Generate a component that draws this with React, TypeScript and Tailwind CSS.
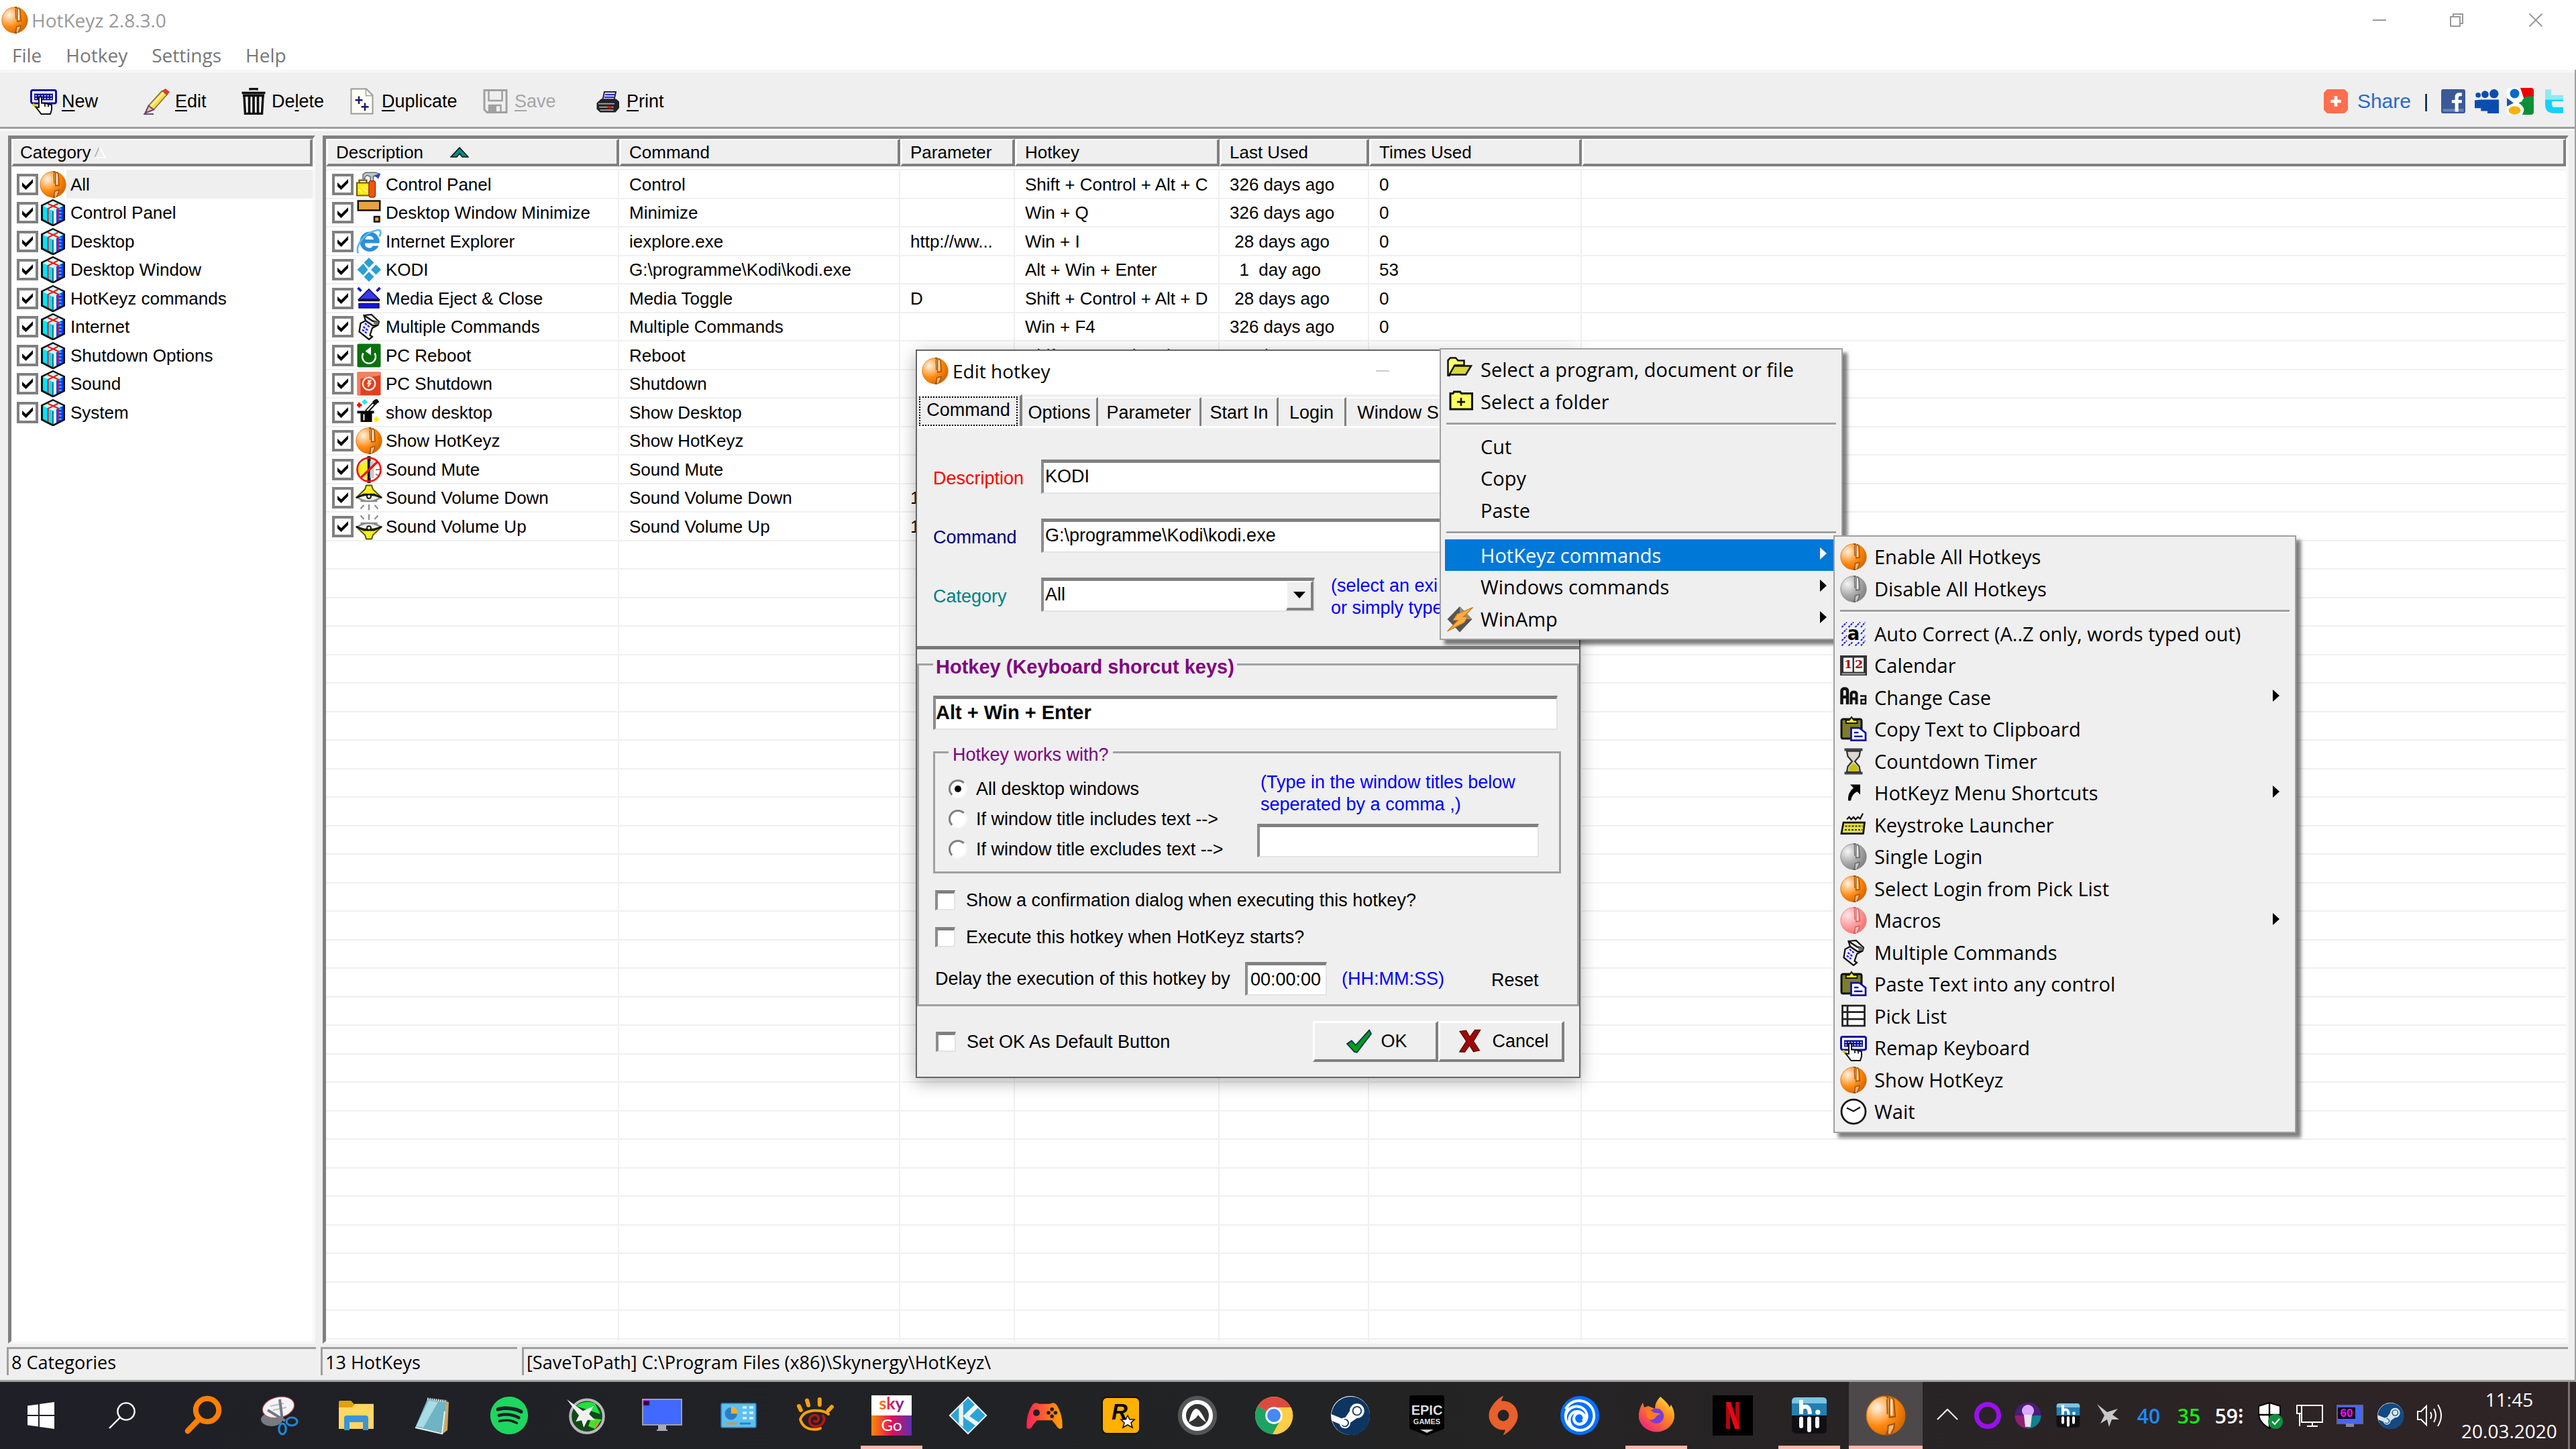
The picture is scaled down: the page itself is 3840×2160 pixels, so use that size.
import { useId, type ReactNode } from "react";
import { FaSpotify, FaSteam } from "react-icons/fa";
import { SiOrigin, SiUbisoft } from "react-icons/si";

const SANS = "font-['Liberation_Sans',Arial,sans-serif]";
const SEGOE = "font-['Open_Sans','Noto_Sans',sans-serif]";
const FIELD =
  "bg-white border-t-[5px] border-l-4 border-r-2 border-b-2 border-t-[#808080] border-l-[#8c8c8c] border-r-[#e3e3e3] border-b-[#e3e3e3] rounded-none outline-none";

/* ---------- icons ---------- */

const BALL_COLORS = {
  orange: ["#fff3e4", "#ff8a10", "#d86a00", "#9a5212"],
  gray: ["#f6f6f6", "#a8a8a8", "#868686", "#666666"],
  pink: ["#ffe6e6", "#ff9a9a", "#f27878", "#c86464"],
};

function Ball({ tone = "orange", className = "size-10" }: { tone?: keyof typeof BALL_COLORS; className?: string }) {
  const id = useId();
  const [light, mid, edge, dark] = BALL_COLORS[tone];
  return (
    <svg viewBox="0 0 32 32" className={className} aria-hidden="true">
      <defs>
        <radialGradient id={id} cx="0.28" cy="0.3" r="0.75">
          <stop offset="0" stopColor={light} />
          <stop offset="0.62" stopColor={mid} />
          <stop offset="1" stopColor={edge} />
        </radialGradient>
      </defs>
      <circle cx="16" cy="16" r="15.4" fill={`url(#${id})`} stroke={edge} strokeWidth=".6" />
      <path d="M15.5 0 L17.5 3 L19 0Z M15.5 32 L17 28 L19 32Z" fill={dark} />
      <path d="M19 1.5 L19 17.5 L23.5 17 L22.5 4 L20.5 1" fill="none" stroke={dark} strokeWidth="1.1" />
      <path d="M20.6 3 L20.6 16" stroke={light} strokeWidth="1.4" />
      <path d="M17.5 30 L18 24 L23 22.5 L22.5 26 L20 31" fill={light} fillOpacity="0.5" stroke={dark} strokeWidth="1.1" />
      <path d="M17 3 L17.4 15" stroke={dark} strokeWidth="1" />
    </svg>
  );
}

function Svg({ children, className = "size-10", box = 16 }: { children: ReactNode; className?: string; box?: number }) {
  return (
    <svg viewBox={`0 0 ${box} ${box}`} className={className} aria-hidden="true">
      {children}
    </svg>
  );
}

const Cube = () => (
  <Svg>
    <path d="M8 .6 L14.6 3.8 V12.2 L8 15.6 L1.4 12.2 V3.8Z" fill="#00e5ff" stroke="#111" strokeWidth="1.2" />
    <path d="M8 7 L14.2 4 V12 L8 15Z" fill="#0038ff" />
    <path d="M8 7 V15 L10 14 V6Z" fill="#e8ffff" />
    <path d="M2 4 L8 1 L14 4 L8 7Z" fill="#c8ffff" />
    <path d="M12.3 5.4 V12.6" stroke="#00c8ff" strokeWidth="1.4" strokeDasharray="1 1" />
    <path d="M4.8 2.6 L11 5.4 V13 M11 2.6 L5 5.6 V13.6" fill="none" stroke="#ff1010" strokeWidth=".8" />
    <path d="M8 7 V15" stroke="#111" strokeWidth=".5" />
  </Svg>
);

const Keyboard = () => (
  <Svg>
    <rect x=".6" y="1.4" width="14.8" height="7.8" rx="1" fill="#fff" stroke="#1010a0" strokeWidth="1.2" />
    <path d="M2.4 3.4H13.6V7.4H2.4Z" fill="#1010a0" />
    <path d="M3 4.7h10M3 6.3h10" stroke="#fff" strokeWidth=".6" strokeDasharray=".9 .9" />
    <path d="M1.6 9.6l3 3" stroke="#d8d000" strokeWidth="1.4" />
    <path d="M5.2 5.4 H6.8 V9 L8.8 9.2 L10.8 9.6 L12.8 10.2 V13 L12 15.6 H6.6 L3.4 11.4 L5.2 11.6Z" fill="#fff" stroke="#111" strokeWidth=".8" />
    <path d="M8.8 9.4v1.8M10.8 9.8v1.6" stroke="#111" strokeWidth=".7" />
  </Svg>
);

const Scroll = () => (
  <Svg>
    <path d="M5 1.2 L9.5 .8 L14 5 L13.4 7 L10 8.8 L8.6 13 L10 14 L8 15.6 L2.2 11 L3 6 L6 4.4Z" fill="#f2f2f2" stroke="#111" strokeWidth=".9" />
    <path d="M5 1.2 L10.2 4.6 L12.8 5.2 M6 4.4 L10.4 7.4 L13.4 7" fill="none" stroke="#111" strokeWidth="1" />
    <path d="M11 5.4 L13.6 6" stroke="#666" strokeWidth="1.6" />
    <path d="M5.6 6 L8.6 8.4 M4.6 8 L7.6 10.4 M4 9.8l2.6 2" stroke="#2020ff" strokeWidth=".9" strokeDasharray="1.4 .6" />
  </Svg>
);

const Clipboard = () => (
  <Svg>
    <rect x=".8" y="2" width="12" height="11.6" rx="1" fill="#7d7d2b" stroke="#111" strokeWidth="1.2" />
    <path d="M3.5 4.4 V2.6 H5.5 L6.8 .8 L8.2 2.6 H10.2 V4.4Z" fill="#ffff20" stroke="#111" strokeWidth=".8" />
    <path d="M6.6 7.2 H11.4 L15.2 10.2 V14.6 H6.6Z" fill="#fff" stroke="#1010a0" strokeWidth="1.1" />
    <path d="M8.4 10 H11 M8.4 12.3 H13.4" stroke="#1010a0" strokeWidth="1" />
  </Svg>
);

const Speaker = ({ down = false }: { down?: boolean }) => (
  <Svg>
    <g transform={down ? "matrix(1 0 0 -1 0 16)" : undefined}>
      <path d="M8 .6 V4 M3 1.4 L5 3.6 M13.4 1.4 L11.4 3.6" stroke="#8a8a8a" strokeWidth=".8" />
      <path d="M3 6 H13 M1 8.2 Q8 3.6 15 8.2" fill="#eee" stroke="#8a8a8a" strokeWidth="1" />
      <path d="M.8 8.4 L5.6 13 L6.4 15.4 H9.6 L10.4 13 L15.2 8.4 L10.6 9.4 H5.4Z" fill="#f4f020" stroke="#55550a" strokeWidth=".8" />
      <path d="M.4 8 L5 10 H11 L15.6 8" fill="none" stroke="#111" strokeWidth="1.1" />
      <circle cx="8" cy="8.8" r="1.2" fill="#ddd" stroke="#111" strokeWidth=".7" />
    </g>
  </Svg>
);

const Reboot = () => (
  <Svg>
    <rect x="1" y="1" width="14" height="14" rx=".8" fill="#0a700e" />
    <path d="M4.6 6.6 A4 4 0 1 0 11.4 6.6" fill="none" stroke="#fff" strokeWidth="1" />
    <path d="M5.8 5.4 L9.2 2.8 V7.8Z" fill="#fff" />
  </Svg>
);

const Power = () => (
  <Svg>
    <rect x="1" y="1" width="14" height="14" rx=".8" fill="#e2401c" />
    <path d="M1 1H15V3L3 5V15H1Z" fill="#f3805f" />
    <circle cx="8" cy="8" r="3.7" fill="none" stroke="#ffe8e0" strokeWidth="1" />
    <path d="M7.2 6.2 H8.8 L7.4 7.8 H8.8 L7.4 9.8" fill="none" stroke="#ffe8e0" strokeWidth=".9" />
  </Svg>
);

const Wand = () => (
  <Svg>
    <path d="M2.2 2v3M.8 3.5h3" stroke="#f00" strokeWidth="1.3" />
    <path d="M5.4 .2v3M4 1.6h3" stroke="#18e8f8" strokeWidth="1.3" />
    <path d="M12.4 10.4v3.2M10.8 12h3.2" stroke="#ffee00" strokeWidth="1.3" />
    <path d="M6.5 7.5 L12 1.6" stroke="#111" strokeWidth="2.4" />
    <path d="M6.8 7 L10.6 3" stroke="#fff" strokeWidth="1" />
    <path d="M10.8 2.4 L13.4 .6" stroke="#111" strokeWidth="2.6" />
    <path d="M1 7h10v1.5h-1.2V13.6H3V8.5H1Z" fill="#000" />
    <path d="M5 9v3.6" stroke="#fff" strokeWidth=".8" />
  </Svg>
);

const Mute = () => (
  <Svg>
    <path d="M8 0V16" stroke="#111" strokeWidth="2" />
    <path d="M7 2 L1 6.5 V10 L7 14Z" fill="#f4f020" />
    <path d="M8.6 3h2.4v10H8.6Z" fill="#ccc" />
    <path d="M12 8h2.5M12 10.6l2 1.4" stroke="#888" strokeWidth=".8" />
    <circle cx="8" cy="8" r="7" fill="none" stroke="#f51010" strokeWidth="1.1" />
    <path d="M3.4 12.6 L13 3.4" stroke="#f51010" strokeWidth="1.3" />
  </Svg>
);

const Eject = () => (
  <Svg>
    <path d="M8 2.4 L14 8.4 H2Z" fill="#3838f0" stroke="#101060" strokeWidth=".7" />
    <path d="M1.6 9.2H14.4" stroke="#111" strokeWidth="1" />
    <rect x="2" y="11" width="12" height="2.6" fill="#1414e8" stroke="#101060" strokeWidth=".6" />
    <path d="M1.4 1.6l2 2M14.6 1.6l-2 2" stroke="#1010c0" strokeWidth="1.5" />
  </Svg>
);

const ControlPanel = () => (
  <Svg>
    <path d="M4.4 4.6V2L6 .8H12L14 1.6L12.4 3H10.6V6H8.8V3.4L7 2.6L5.6 3.4V4.6Z" fill="#b8c8c8" stroke="#556" strokeWidth=".5" />
    <path d="M11 2.6 L15 1.4 L13.6 4.6Z" fill="#2c3cd0" />
    <rect x=".8" y="7" width="7.4" height="7.6" fill="#ffe800" stroke="#6b5a00" strokeWidth=".8" />
    <path d="M2.2 7V5.4H6.6V7" fill="none" stroke="#6b5a00" strokeWidth=".9" />
    <path d="M2 11l2 2M3.4 9l3.6 3.6M5.6 8.6l1.8 1.8" stroke="#fffcc0" strokeWidth=".6" />
    <rect x="8" y="5.8" width="3.8" height="9.8" rx="1.2" fill="#f0560a" stroke="#8a2a00" strokeWidth=".5" />
  </Svg>
);

const MinimizeIcon = () => (
  <Svg>
    <rect x="1.5" y="1" width="13" height="5.6" fill="#e8a23c" stroke="#111" strokeWidth="1" />
    <rect x="11.2" y="10.4" width="3" height="3" fill="#e8a23c" stroke="#111" strokeWidth="1" />
  </Svg>
);

const Explorer = () => (
  <Svg>
    <path d="M8.2 2.2 A5.9 5.9 0 1 0 13.8 10.6 H10.4 A2.6 2.6 0 0 1 5.6 9 H14.2 A5.9 5.9 0 0 0 8.2 2.2Z M5.7 6.8 A2.6 2.6 0 0 1 10.8 6.8Z" fill="#2a8fe0" fillRule="evenodd" />
    <path d="M1.6 15 C-.6 11 5 2.6 13 1.2 C15.4 .9 15.4 3 14.2 5" fill="none" stroke="#5ab8f4" strokeWidth="1.1" />
  </Svg>
);

const Kodi = () => (
  <Svg>
    <path d="M8 .8 L11 3.8 L8 6.8 L5 3.8Z M12.2 5 L15.2 8 L12.2 11 L9.2 8Z M8 9.2 L11 12.2 L8 15.2 L5 12.2Z M4.6 4.4 L7.4 8 L4.6 11.4 L1 8Z" fill="#2a9fd6" />
  </Svg>
);

const FolderOpen = () => (
  <Svg>
    <path d="M1 12 V2.4 L2.4 1 H5.6 L7 2.6 H10.6 V5.4 H5 L1.6 12" fill="#ffff70" stroke="#111" strokeWidth="1" />
    <path d="M4.8 5.8 H14.8 L11.6 11 H1.8Z" fill="#d8d83a" stroke="#111" strokeWidth="1" />
  </Svg>
);

const FolderPlus = () => (
  <Svg>
    <path d="M2.4 12.4 V3 H4 L4.6 2 H8.2 L9 3 H15.4 V12.4Z" fill="#ffff60" stroke="#111" strokeWidth="1.2" />
    <path d="M8.8 5.6 V10.4 M6.4 8 H11.2" stroke="#111" strokeWidth="1.1" />
  </Svg>
);

const Winamp = () => (
  <Svg>
    <path d="M8 .4 L15.4 8 L8 15.8 L.6 8Z" fill="#555" />
    <path d="M8 .4 L15.4 8 L8 8Z" fill="#8e8e8e" />
    <path d="M15.8 1 L6.4 5 L4 8.6 H7 L.6 15.2 L10.6 10 L12.8 6.6 H10.2Z" fill="#ffad42" stroke="#c77a1a" strokeWidth=".5" />
  </Svg>
);

const AutoCorrect = () => (
  <Svg>
    <path d="M1 4l3-3M1 8l3-3M1 12l3-3M1 15l3-3M5 4l3-3M9 4l3-3M12.4 4l2.6-3M12.4 8l2.6-3M12.4 12l2.6-3M12.4 15l2.6-3M5 15l2.4-2M9 15l2.4-2" stroke="#2020e0" strokeWidth=".8" strokeDasharray="1.3 .5" />
    <text x="8" y="11.6" textAnchor="middle" fontSize="11" fontWeight="700" fontFamily="DejaVu Sans">a</text>
  </Svg>
);

const CalendarIcon = () => (
  <Svg>
    <rect x="0" y="2" width="16" height="12" fill="#333" />
    <path d="M2 3.4h5.4v8.4H2ZM8.4 3.4H14v8.4H8.4Z" fill="#fff" />
    <text x="4.8" y="9.6" textAnchor="middle" fontSize="7" fontWeight="700" fill="#a00000" fontFamily="DejaVu Serif">1</text>
    <text x="11.2" y="9.6" textAnchor="middle" fontSize="7" fontWeight="700" fill="#a00000" fontFamily="DejaVu Serif">2</text>
    <path d="M1 13h14" stroke="#aaa" strokeWidth=".8" />
  </Svg>
);

const ChangeCase = () => (
  <Svg>
    <path d="M1 12V4q0-1.4 1.7-1.4T4.4 4v8M1 7.6h3.4" fill="none" stroke="#111" strokeWidth="1.8" />
    <path d="M6.6 12V6q0-1.4 1.6-1.4T9.8 6v6M6.6 8.6h3.2" fill="none" stroke="#111" strokeWidth="1.6" />
    <path d="M12 7h3.2v4.6H12.6V9.2h2.6" fill="none" stroke="#111" strokeWidth="1" />
  </Svg>
);

const Hourglass = () => (
  <Svg>
    <path d="M2.6 1H13.4M2.6 15H13.4" stroke="#444" strokeWidth="1.6" />
    <path d="M4 1.8 H12 L11.4 5 L8.8 8 L11.4 11 L12 14.2 H4 L4.6 11 L7.2 8 L4.6 5Z" fill="#d8d8d0" stroke="#333" strokeWidth=".9" />
    <path d="M5 14 L5.6 11 L8 9 L10.4 11 L11 14Z" fill="#c8c010" />
  </Svg>
);

const ShortcutArrow = () => (
  <Svg>
    <path d="M6 3 H12 V9 L10.2 7.2 Q7 8.6 6.4 12.6 H4.8 Q4.4 7.8 8 5Z" fill="#000" />
  </Svg>
);

const Keystroke = () => (
  <Svg>
    <path d="M4 4.6l1.4-1.4 1.2 1.4 1.4-1.4 1.2 1.4 1.4-1.4 1.4 1L13.6 1" fill="none" stroke="#111" strokeWidth=".9" />
    <path d="M2 6.4 H14.6 L13.8 13 H.8Z" fill="#e4e040" stroke="#111" strokeWidth="1.1" />
    <path d="M3 8.6h10.4M2.8 10.8h10.4" stroke="#333" strokeWidth=".8" strokeDasharray="1.2 .8" />
  </Svg>
);

const PickList = () => (
  <Svg>
    <path d="M1.4 1.6H14.6V13.6H1.4ZM1.4 5.4H14.6M1.4 9.6H14.6M4.4 1.6V13.6" fill="#fff" stroke="#222" strokeWidth="1.1" />
  </Svg>
);

const ClockIcon = () => (
  <Svg>
    <circle cx="8" cy="8" r="7.2" fill="#fff" stroke="#111" strokeWidth="1.1" />
    <path d="M4 5.8 L8 7.8 L12 5.4" fill="none" stroke="#111" strokeWidth=".9" />
  </Svg>
);

/* ---------- shared controls ---------- */

function TickBox({ label }: { label: string }) {
  return (
    <span className="grid size-8 shrink-0">
      <input
        type="checkbox"
        defaultChecked
        aria-label={label}
        className="col-start-1 row-start-1 size-8 appearance-none border-4 border-[#808080] bg-white"
      />
      <svg viewBox="0 0 12 12" className="pointer-events-none col-start-1 row-start-1 m-2 size-4" aria-hidden="true">
        <path d="M0 3.8 L4.2 7.6 L12 0 V4.2 L4.2 12 L0 8Z" fill="#000" />
      </svg>
    </span>
  );
}

function EmptyBox({ id, children }: { id: string; children: ReactNode }) {
  return (
    <div className="flex h-[55px] items-center gap-4">
      <input id={id} type="checkbox" className={`size-[30px] appearance-none ${FIELD}`} />
      <label htmlFor={id}>{children}</label>
    </div>
  );
}

function Radio({ id, checked, children }: { id: string; checked?: boolean; children: ReactNode }) {
  return (
    <div className="flex h-[45px] items-center gap-[13px]">
      <span className="grid size-7">
        <input
          id={id}
          type="radio"
          name="works-with"
          defaultChecked={checked}
          className="peer col-start-1 row-start-1 size-7 appearance-none rounded-full border-[3px] border-[#808080] border-r-[#f8f8f8] border-b-[#f8f8f8] bg-white"
        />
        <span className="pointer-events-none col-start-1 row-start-1 m-auto hidden size-[10px] rounded-full bg-black peer-checked:block" />
      </span>
      <label htmlFor={id}>{children}</label>
    </div>
  );
}

/* ---------- data ---------- */

const CATEGORIES = [
  "All",
  "Control Panel",
  "Desktop",
  "Desktop Window",
  "HotKeyz commands",
  "Internet",
  "Shutdown Options",
  "Sound",
  "System",
];

type Row = { icon: ReactNode; cells: [string, string, string, string, string, string] };

const HOTKEYS: Row[] = [
  { icon: <ControlPanel />, cells: ["Control Panel", "Control", "", "Shift + Control + Alt + C", "326 days ago", "0"] },
  { icon: <MinimizeIcon />, cells: ["Desktop Window Minimize", "Minimize", "", "Win + Q", "326 days ago", "0"] },
  { icon: <Explorer />, cells: ["Internet Explorer", "iexplore.exe", "http://ww...", "Win + I", " 28 days ago", "0"] },
  { icon: <Kodi />, cells: ["KODI", "G:\\programme\\Kodi\\kodi.exe", "", "Alt + Win + Enter", "  1  day ago", "53"] },
  { icon: <Eject />, cells: ["Media Eject & Close", "Media Toggle", "D", "Shift + Control + Alt + D", " 28 days ago", "0"] },
  { icon: <Scroll />, cells: ["Multiple Commands", "Multiple Commands", "", "Win + F4", "326 days ago", "0"] },
  { icon: <Reboot />, cells: ["PC Reboot", "Reboot", "", "Shift + Control + Alt + R", " 28 days ago", "0"] },
  { icon: <Power />, cells: ["PC Shutdown", "Shutdown", "", "", "", ""] },
  { icon: <Wand />, cells: ["show desktop", "Show Desktop", "", "", "", ""] },
  { icon: <Ball />, cells: ["Show HotKeyz", "Show HotKeyz", "", "", "", ""] },
  { icon: <Mute />, cells: ["Sound Mute", "Sound Mute", "", "", "", ""] },
  { icon: <Speaker down />, cells: ["Sound Volume Down", "Sound Volume Down", "1", "", "", ""] },
  { icon: <Speaker />, cells: ["Sound Volume Up", "Sound Volume Up", "1", "", "", ""] },
];

const COLUMNS = [
  { name: "Description", width: "w-[437px]" },
  { name: "Command", width: "w-[419px]" },
  { name: "Parameter", width: "w-[171px]" },
  { name: "Hotkey", width: "w-[305px]" },
  { name: "Last Used", width: "w-[223px]" },
  { name: "Times Used", width: "w-[317px]" },
];

type MenuEntry = { label: string; icon?: ReactNode; sub?: boolean; active?: boolean } | null;

const CONTEXT_MENU: MenuEntry[] = [
  { label: "Select a program, document or file", icon: <FolderOpen /> },
  { label: "Select a folder", icon: <FolderPlus /> },
  null,
  { label: "Cut" },
  { label: "Copy" },
  { label: "Paste" },
  null,
  { label: "HotKeyz commands", sub: true, active: true },
  { label: "Windows commands", sub: true },
  { label: "WinAmp", icon: <Winamp />, sub: true },
];

const SUB_MENU: MenuEntry[] = [
  { label: "Enable All Hotkeys", icon: <Ball /> },
  { label: "Disable All Hotkeys", icon: <Ball tone="gray" /> },
  null,
  { label: "Auto Correct (A..Z only, words typed out)", icon: <AutoCorrect /> },
  { label: "Calendar", icon: <CalendarIcon /> },
  { label: "Change Case", icon: <ChangeCase />, sub: true },
  { label: "Copy Text to Clipboard", icon: <Clipboard /> },
  { label: "Countdown Timer", icon: <Hourglass /> },
  { label: "HotKeyz Menu Shortcuts", icon: <ShortcutArrow />, sub: true },
  { label: "Keystroke Launcher", icon: <Keystroke /> },
  { label: "Single Login", icon: <Ball tone="gray" /> },
  { label: "Select Login from Pick List", icon: <Ball /> },
  { label: "Macros", icon: <Ball tone="pink" />, sub: true },
  { label: "Multiple Commands", icon: <Scroll /> },
  { label: "Paste Text into any control", icon: <Clipboard /> },
  { label: "Pick List", icon: <PickList /> },
  { label: "Remap Keyboard", icon: <Keyboard /> },
  { label: "Show HotKeyz", icon: <Ball /> },
  { label: "Wait", icon: <ClockIcon /> },
];

/* ---------- window chrome ---------- */

function TitleBar() {
  return (
    <header className="bg-white text-[#999]">
      <div className="flex h-[60px] items-center">
        <Ball className="ml-[2px] size-10" />
        <h1 className={`ml-[5px] text-[28px] leading-8 ${SEGOE}`}>HotKeyz 2.8.3.0</h1>
        <div className="ml-auto flex h-full">
          <button aria-label="Minimize" className="grid w-[115px] place-items-center">
            <svg viewBox="0 0 20 20" className="size-5"><path d="M0 10H20" stroke="#999" strokeWidth="2" /></svg>
          </button>
          <button aria-label="Restore" className="grid w-[115px] place-items-center">
            <svg viewBox="0 0 20 20" className="size-5" fill="none" stroke="#999" strokeWidth="2">
              <path d="M1 5H15V19H1ZM5 5V1H19V15H15" />
            </svg>
          </button>
          <button aria-label="Close" className="grid w-[121px] place-items-center">
            <svg viewBox="0 0 20 20" className="size-5"><path d="M.5 .5L19.5 19.5M19.5 .5L.5 19.5" stroke="#999" strokeWidth="2" /></svg>
          </button>
        </div>
      </div>
      <nav className={`flex h-11 items-center gap-9 pl-[18px] text-[28px] leading-8 text-[#777] ${SEGOE}`}>
        {["File", "Hotkey", "Settings", "Help"].map((m) => (
          <button key={m}>{m}</button>
        ))}
      </nav>
    </header>
  );
}

const TOOLS = [
  { pre: "", key: "N", post: "ew", width: "w-[169px]", icon: <Keyboard /> },
  {
    pre: "", key: "E", post: "dit", width: "w-[146px]",
    icon: (
      <Svg>
        <path d="M1 15 L3 10.6 L11 1.8 L14 4 L6 13Z" fill="#ffd94a" stroke="#8a7430" strokeWidth=".7" />
        <path d="M11 1.8 L13 .4 L15.6 2.4 L14 4.4Z" fill="#d0402c" />
        <path d="M4 11.4 L12 2.8" stroke="#fff2b0" strokeWidth="1" />
        <path d="M0 15.6 H6 M1 15 L3 10.6 L6 13Z" stroke="#6b4a70" strokeWidth=".8" fill="#e8c0a0" />
      </Svg>
    ),
  },
  {
    pre: "De", key: "l", post: "ete", width: "w-[162px]",
    icon: (
      <Svg className="-ml-[2px] size-10">
        <path d="M6 1.4V.6h4v.8M1 3h14M1.6 4.6h12.8" stroke="#111" strokeWidth="1.4" fill="none" />
        <path d="M2.4 4.6H13.6L13 15.4H3Z" fill="#fff" stroke="#111" strokeWidth="1.4" />
        <path d="M5.4 5V15M8 5V15M10.6 5V15" stroke="#111" strokeWidth="1.5" />
      </Svg>
    ),
  },
  {
    pre: "", key: "D", post: "uplicate", width: "w-[198px]",
    icon: (
      <Svg>
        <path d="M.6 .6H9.6L13.4 4.4V15.4H.6Z" fill="#fdfdf4" stroke="#999" strokeWidth=".8" />
        <path d="M9.4 .8V4.6H13.2" fill="none" stroke="#aaa" strokeWidth=".7" />
        <path d="M5.2 5V9.6M3 7.3H7.4M8.8 9V13.6M6.6 11.3H11" stroke="#1a1a70" strokeWidth="1" />
      </Svg>
    ),
  },
  {
    pre: "", key: "S", post: "ave", width: "w-[167px]", off: true,
    icon: (
      <Svg>
        <path d="M.8 1.4H14V14.6H2.4L.8 13Z" fill="#efefef" stroke="#a0a0a0" strokeWidth="1.2" />
        <path d="M3.4 1.6V7.6H11.4V1.6M3.6 14V10.4H10.6V14" fill="none" stroke="#a0a0a0" strokeWidth="1" />
        <path d="M4 10.6h4v3.6H4Z" fill="#a0a0a0" />
      </Svg>
    ),
  },
  {
    pre: "", key: "P", post: "rint", width: "w-[140px]",
    icon: (
      <Svg>
        <path d="M5.6 2.4H12.4L11.4 7H4.6Z" fill="#fff" stroke="#222" strokeWidth=".8" />
        <path d="M6 4h5.6M5.6 5.6h5.6" stroke="#2a2aff" strokeWidth="1" />
        <path d="M3.6 6.6H12.6L14.4 8.2V12L12.2 14.6H3L1 12.6V9Z" fill="#222" />
        <path d="M2 9.4H11.6M2.4 11.4H11M3 13.2H11" stroke="#aaa" strokeWidth=".7" />
        <path d="M7.4 11.6H10" stroke="#e01010" strokeWidth="1.3" />
      </Svg>
    ),
  },
];

function Toolbar() {
  return (
    <div className="flex h-[88px] shrink-0 items-center border-t-4 border-b-[3px] border-t-[#f7f7f7] border-b-[#a0a0a0] pt-1 pl-[45px] text-[27px] leading-8">
      {TOOLS.map((t) => (
        <button key={t.key + t.post} disabled={t.off} className={`flex items-center gap-[7px] text-left ${t.width} ${t.off ? "text-[#a6a6a6]" : "text-black"}`}>
          {t.icon}
          <span>
            {t.pre}
            <u className="underline-offset-4">{t.key}</u>
            {t.post}
          </span>
        </button>
      ))}
      <div className="ml-auto flex items-center pr-4">
        <a href="#share" className="flex items-center gap-[14px] text-[30px] text-[#2a6ac8]">
          <svg viewBox="0 0 14 14" className="size-9">
            <path d="M2 0H12L14 2V12L12 14H2L0 12V2Z" fill="#ff6e4e" />
            <path d="M7 4V10M4 7H10" stroke="#fff" strokeWidth="1.8" />
          </svg>
          Share
        </a>
        <span className="mx-[19px] text-[27px]">|</span>
        <a href="#facebook" aria-label="Facebook">
          <svg viewBox="0 0 14 14" className="size-9">
            <rect width="14" height="14" rx="1.2" fill="#3b5998" />
            <path d="M1 11.4H13V13H1Z" fill="#6d84b4" />
            <path d="M8 13V8H6.2V6.2H8V4.6Q8 2 10.4 2H12V4H11Q10 4 10 5V6.2H12V8H10V13Z" fill="#fff" />
          </svg>
        </a>
        <a href="#myspace" aria-label="Myspace" className="ml-[14px]">
          <svg viewBox="0 0 14 14" className="size-9" fill="#0a4cb0">
            <circle cx="2" cy="3.4" r="1.5" />
            <circle cx="6" cy="3" r="2.1" />
            <circle cx="11.2" cy="2.6" r="2.6" />
            <path d="M0 6.4L3.6 6L7.4 6L14 6V14H7.4V12.6H3.6V11H0Z" />
          </svg>
        </a>
        <a href="#google" aria-label="Google" className="ml-3">
          <svg viewBox="0 0 16 16" className="size-10">
            <rect width="16" height="16" rx="1.4" fill="#fff" />
            <path d="M8 0H15L16 1V6H10Z" fill="#f00000" />
            <path d="M9 8Q10 5 13 5H16V15L15 16H9Q12 12 7 9Z" fill="#0a9038" />
            <path d="M0 6L4 9L0 11Z" fill="#1a50b0" />
            <circle cx="4.6" cy="3.4" r="2.8" fill="#0a6ac8" />
            <ellipse cx="4.6" cy="13.4" rx="3.6" ry="2.5" fill="#f8b010" />
          </svg>
        </a>
        <a href="#twitter" aria-label="Twitter" className="ml-[17px]">
          <svg viewBox="0 0 11 14" className="h-9 w-7">
            <path d="M0 0H3.6V3.4H10.6V6H0Z" fill="#8deaf4" />
            <path d="M0 6H10.6V7H4.2Q3.4 9 4.6 10.4H10.6V14H4Q0 13.4 0 9Z" fill="#14d2fa" />
          </svg>
        </a>
      </div>
    </div>
  );
}

const HEAD =
  "flex h-[41px] items-center border-t-2 border-b-4 border-l-[3px] border-r-4 border-t-white border-b-[#808080] border-l-white border-r-[#808080] bg-[#efefef] text-left font-normal";
const PANEL =
  "overflow-hidden border-t-[5px] border-l-[5px] border-r-4 border-b-4 border-t-[#808080] border-l-[#808080] border-r-[#f8f8f8] border-b-[#f8f8f8] bg-white";

function CategoryPanel() {
  return (
    <aside className={`w-[458px] shrink-0 ${PANEL}`}>
      <div className={`${HEAD} pl-[10px]`}>
        Category
        <svg viewBox="0 0 18 18" className="ml-1 size-[18px]">
          <path d="M1 17L8 1" stroke="#aaa" strokeWidth="1.5" />
          <path d="M8 1L17 17H1" fill="none" stroke="#fff" strokeWidth="2" />
        </svg>
      </div>
      <ul className="pt-[5px]">
        {CATEGORIES.map((c, i) => (
          <li key={c} className="flex items-center pl-2 odd:h-[43px] even:h-[42px]">
            <TickBox label={c} />
            <span className="ml-[2px] grid size-10 place-items-center">{i === 0 ? <Ball /> : <Cube />}</span>
            <span className={`flex h-full flex-1 items-center pl-[6px] ${i === 0 ? "bg-[#efefef]" : ""}`}>{c}</span>
          </li>
        ))}
      </ul>
    </aside>
  );
}

function HotkeyTable() {
  return (
    <main className={`min-w-0 flex-1 ${PANEL}`}>
      <table className="w-full table-fixed border-separate border-spacing-0">
        <thead>
          <tr>
            {COLUMNS.map((c, i) => (
              <th key={c.name} className={`border-b-2 border-[#f0f0f0] p-0 pb-1 ${c.width}`}>
                <div className={`${HEAD} pl-3`}>
                  {c.name}
                  {i === 0 && (
                    <svg viewBox="0 0 28 16" className="ml-10 h-4 w-7">
                      <path d="M14 1L27 15H18L14 10L10 15H1Z" fill="#0a8a80" stroke="#111" strokeWidth="1.6" />
                    </svg>
                  )}
                </div>
              </th>
            ))}
            <th className="border-b-2 border-[#f0f0f0] p-0 pb-1" aria-label="filler">
              <div className={HEAD} />
            </th>
          </tr>
        </thead>
        <tbody>
          {HOTKEYS.map((r) => (
            <tr key={r.cells[0]} className="odd:h-[43px] even:h-[42px]">
              {r.cells.map((text, i) => (
                <td key={i} className="border-r-2 border-b-2 border-[#f0f0f0] p-0">
                  {i === 0 ? (
                    <div className="flex h-10 items-center pl-[9px]">
                      <TickBox label={text} />
                      <span className="ml-[3px] size-10 shrink-0">{r.icon}</span>
                      <span className="pl-[5px] whitespace-nowrap">{text}</span>
                    </div>
                  ) : (
                    <div className="pl-[15px] whitespace-pre">{text}</div>
                  )}
                </td>
              ))}
              <td className="border-b-2 border-[#f0f0f0] p-0" />
            </tr>
          ))}
          {/* blank grid lines under the last entry */}
          {Array.from({ length: 29 }, (_, n) => (
            <tr key={n} className="odd:h-[43px] even:h-[42px]">
              {COLUMNS.map((c) => (
                <td key={c.name} className="border-r-2 border-b-2 border-[#f0f0f0] p-0" />
              ))}
              <td className="border-b-2 border-[#f0f0f0] p-0" />
            </tr>
          ))}
        </tbody>
      </table>
    </main>
  );
}

function StatusBar() {
  const cell = "flex h-[42px] items-center border-t-[3px] border-l-[3px] border-t-[#a0a0a0] border-l-[#a0a0a0] pl-1 whitespace-nowrap";
  return (
    <footer className={`mt-[5px] flex shrink-0 gap-[7px] border-b-[3px] border-[#a0a0a0] pr-[10px] pb-[7px] pl-[10px] text-[27px] leading-8 ${SEGOE}`}>
      <div className={`${cell} w-[461px]`}>8 Categories</div>
      <div className={`${cell} w-[293px]`}>13 HotKeys</div>
      <div className={`${cell} flex-1`}>[SaveToPath] C:\Program Files (x86)\Skynergy\HotKeyz\</div>
    </footer>
  );
}

/* ---------- edit dialog ---------- */

function Dialog() {
  return (
    <section
      role="dialog"
      aria-label="Edit hotkey"
      className="absolute top-[521px] left-[1365px] w-[991px] border-2 border-[#666] bg-[#efefef] text-[27px] leading-8 shadow-[0_6px_24px_rgba(0,0,0,0.3)]"
    >
      <header className="flex h-[65px] items-center bg-white pb-[5px] pl-[7px]">
        <Ball />
        <h2 className={`ml-[6px] text-[28px] ${SEGOE}`}>Edit hotkey</h2>
        <button aria-label="Minimize" className="ml-[486px] h-[2px] w-5 bg-[#ccc]" />
      </header>

      <div role="tablist" className="flex h-[50px] items-end overflow-hidden border-b-[3px] border-white">
        <button role="tab" aria-selected="true" className="-mb-[3px] h-[50px] w-[157px] border-t-2 border-r-4 border-t-white border-r-[#808080] bg-[#efefef] px-[5px] pt-[2px] pb-[5px]">
          <span className="flex h-[40px] items-center justify-center pb-[3px] outline-2 outline-dotted outline-black">Command</span>
        </button>
        {[
          ["Options", "w-[113px]"],
          ["Parameter", "w-[154px]"],
          ["Start In", "w-[115px]"],
          ["Login", "w-[101px]"],
          ["Window S", "w-[157px]"],
        ].map(([name, width]) => (
          <button key={name} role="tab" className={`h-[43px] shrink-0 border-t-2 border-r-[3px] border-t-white border-r-[#808080] whitespace-nowrap ${width}`}>
            {name}
          </button>
        ))}
      </div>

      <div className="grid grid-cols-[161px_1fr] items-center gap-y-[37px] border-b-[5px] border-[#787878] pt-[47px] pb-[51px] pl-6">
        <label htmlFor="desc" className="pt-1 text-[#ff0000]">Description</label>
        <input id="desc" defaultValue="KODI" className={`h-[51px] pb-1 pl-[2px] ${FIELD}`} />
        <label htmlFor="cmd" className="pt-1 text-[#000080]">Command</label>
        <input id="cmd" defaultValue="G:\programme\Kodi\kodi.exe" className={`h-[51px] pb-1 pl-[2px] ${FIELD}`} />
        <label htmlFor="cat" className="pt-1 text-[#008080]">Category</label>
        <div className="flex h-[51px] items-center">
          <div className="grid">
            <select id="cat" className={`col-start-1 row-start-1 h-[51px] w-[408px] appearance-none pb-1 pl-[2px] ${FIELD}`}>
              <option>All</option>
            </select>
            <span className="pointer-events-none col-start-1 row-start-1 mt-[5px] mr-[2px] mb-[2px] ml-auto grid w-[41px] place-items-center border-t-2 border-r-4 border-b-4 border-l-2 border-t-white border-r-[#808080] border-b-[#808080] border-l-white bg-[#efefef]">
              <svg viewBox="0 0 18 10" className="h-[10px] w-[18px]"><path d="M0 0H18L9 10Z" /></svg>
            </span>
          </div>
          <p className="ml-6 pt-[6px] leading-[33px] whitespace-nowrap text-[#0000ff]">
            (select an exi
            <br />
            or simply type
          </p>
        </div>
      </div>

      <fieldset className="mt-[6px] border-[3px] border-[#a0a0a0] pb-[13px] pl-[21px]">
        <legend className="ml-0 h-8 px-1 text-[29px] leading-10 font-bold text-[#800080]">Hotkey (Keyboard shorcut keys)</legend>
        <input aria-label="Hotkey" defaultValue="Alt + Win + Enter" className={`mt-[31px] h-[51px] w-[931px] pb-1 text-[29px] font-bold ${FIELD}`} />

        <fieldset className="mt-[17px] flex w-[933px] border-[3px] border-[#a0a0a0] pr-[30px] pb-[11px] pl-5">
          <legend className="ml-0 h-8 px-[6px] leading-10 text-[#800080]">Hotkey works with?</legend>
          <div className="w-[460px] pt-4">
            <Radio id="w-all" checked>All desktop windows</Radio>
            <Radio id="w-inc">If window title includes text --&gt;</Radio>
            <Radio id="w-exc">If window title excludes text --&gt;</Radio>
          </div>
          <div className="flex-1 pt-[13px]">
            <label htmlFor="titles" className="block pl-[5px] leading-[33px] whitespace-nowrap text-[#0000ff]">
              (Type in the window titles below
              <br />
              seperated by a comma ,)
            </label>
            <input id="titles" className={`mt-3 h-[50px] w-[420px] ${FIELD}`} />
          </div>
        </fieldset>

        <div className="mt-3 pl-[3px]">
          <EmptyBox id="confirm">Show a confirmation dialog when executing this hotkey?</EmptyBox>
          <EmptyBox id="autostart">Execute this hotkey when HotKeyz starts?</EmptyBox>
          <div className="mt-[10px] flex items-center">
            <label htmlFor="delay" className="w-[462px]">Delay the execution of this hotkey by</label>
            <input id="delay" defaultValue="00:00:00" className={`h-[50px] w-[122px] pl-1 ${FIELD}`} />
            <span className="ml-[22px] text-[#0000ff]">(HH:MM:SS)</span>
            <button className="ml-[70px] pt-1">Reset</button>
          </div>
        </div>
      </fieldset>

      <footer className="flex items-center pt-[22px] pr-[22px] pb-[22px] pl-7">
        <EmptyBox id="default">Set OK As Default Button</EmptyBox>
        <button className="ml-auto flex h-[61px] w-[187px] items-center justify-center gap-3 border-t-[3px] border-r-4 border-b-4 border-l-[3px] border-t-white border-r-[#808080] border-b-[#808080] border-l-white pl-1">
          <svg viewBox="0 0 20 18" className="h-9 w-10">
            <path d="M1 11 L4.4 8.6 L7.4 12 L17.6 .8 L19 3.6 L8.4 17.4 L6.4 17Z" fill="#00a010" stroke="#0a2a60" strokeWidth=".9" />
          </svg>
          OK
        </button>
        <button className="flex h-[61px] w-[188px] items-center justify-center gap-4 border-t-[3px] border-r-4 border-b-4 border-l-[3px] border-t-white border-r-[#808080] border-b-[#808080] border-l-white pl-2">
          <svg viewBox="0 0 16 17" className="h-9 w-[34px]">
            <path d="M1 1.6 L5.4 1 L8 5.6 L11.6 .6 H15.4 L10.6 8.6 L14.8 15 L10.6 16 L7.8 11.4 L4.4 16.2 L.8 16 L5.6 8.6Z" fill="#a00808" stroke="#500" strokeWidth=".6" />
          </svg>
          Cancel
        </button>
      </footer>
    </section>
  );
}

/* ---------- popup menus ---------- */

function PopupMenu({ items, place, arrowPad }: { items: MenuEntry[]; place: string; arrowPad: string }) {
  return (
    <ul role="menu" className={`absolute border-2 border-[#a0a0a0] bg-[#efefef] p-[6px] text-[29px] leading-8 text-black shadow-[7px_7px_5px_rgba(0,0,0,0.5)] ${SEGOE} ${place}`}>
      {items.map((it, i) =>
        it ? (
          <li
            key={it.label}
            role="menuitem"
            className={`flex items-center odd:h-[48px] even:h-[47px] ${arrowPad} ${it.active ? "bg-[#0078d7] text-white" : ""}`}
          >
            <span className="ml-[2px] grid size-10 place-items-center">{it.icon}</span>
            <span className="ml-[11px] whitespace-nowrap">{it.label}</span>
            {it.sub && (
              <svg viewBox="0 0 10 18" className="mb-[5px] ml-auto h-[18px] w-[10px]" fill="currentColor">
                <path d="M0 0L10 9L0 18Z" />
              </svg>
            )}
          </li>
        ) : (
          <li key={i} role="separator" className="mx-[2px] flex h-5 items-center">
            <span className="h-[5px] w-full border-t-[3px] border-b-2 border-t-[#a0a0a0] border-b-white" />
          </li>
        ),
      )}
    </ul>
  );
}

/* ---------- taskbar ---------- */

const Disc = ({ children, className }: { children: ReactNode; className: string }) => (
  <span className={`grid size-[58px] place-items-center rounded-full ${className}`}>{children}</span>
);

const Monitor = ({ className }: { className: string }) => (
  <svg viewBox="0 0 30 30" className={className}>
    <rect x=".5" y="3" width="29" height="19" fill="#4169ff" stroke="#9aa0a8" strokeWidth="1" />
    <path d="M12 22.5h6v3h-6zM11 25.5h8v1H11z" fill="#aab" />
    <rect x="1" y="4" width="4.6" height="3.6" fill="#300040" stroke="#d010e0" strokeWidth=".5" />
  </svg>
);

const Meter = ({ className }: { className: string }) => (
  <svg viewBox="0 0 30 30" className={className}>
    <rect x="2" y="1.5" width="26" height="27" rx="3" fill="#101014" />
    <path d="M2 4.5Q2 1.5 5 1.5H25Q28 1.5 28 4.5V15H2Z" fill="#2280b0" />
    <path d="M2 4.5Q2 1.5 5 1.5H25Q28 1.5 28 4.5V6H2Z" fill="#7cc4e2" />
    <path d="M9 3.4V14M9 9.4Q15.4 6 15.4 14" fill="none" stroke="#fff" strokeWidth="3" />
    <circle cx="21.4" cy="12.6" r="1.8" fill="#fff" />
    <path d="M9 17.4V23M15 17.4V26M21 17.4V23" stroke="#fff" strokeWidth="3" strokeLinecap="round" />
  </svg>
);

type AppEntry = { name: string; icon: ReactNode; open?: boolean; active?: boolean };

const B = "size-[60px]";

const APPS: AppEntry[] = [
  {
    name: "Everything",
    icon: (
      <svg viewBox="0 0 30 30" className={B} fill="none" stroke="#ff7f00">
        <circle cx="18" cy="11" r="8.6" strokeWidth="4" />
        <path d="M11.6 18L3.4 26.6" strokeWidth="4.2" strokeLinecap="round" />
      </svg>
    ),
  },
  {
    name: "Snipping Tool",
    icon: (
      <svg viewBox="0 0 30 30" className={B}>
        <ellipse cx="9" cy="18" rx="8" ry="5" fill="#777a80" />
        <ellipse cx="14" cy="9" rx="12" ry="7.6" fill="#f4f4f6" stroke="#c05050" strokeWidth=".6" transform="rotate(-14 14 9)" />
        <path d="M8 8l10-2M10 11l10-2" stroke="#bbb" strokeWidth="1" />
        <path d="M15 3L17 19M6 11L19 19" stroke="#778" strokeWidth="2" />
        <ellipse cx="17" cy="25" rx="2.6" ry="4" fill="none" stroke="#1e88d2" strokeWidth="1.6" />
        <ellipse cx="24" cy="19.5" rx="4" ry="3" fill="none" stroke="#1e88d2" strokeWidth="1.6" />
      </svg>
    ),
  },
  {
    name: "Explorer",
    icon: (
      <svg viewBox="0 0 30 30" className={B}>
        <path d="M2 5Q2 4 3 4H11L14 7H26V12H2Z" fill="#e0a010" />
        <path d="M2 9H12L14 6.4H28V25H2Z" fill="#ffd764" />
        <path d="M6 26V17Q6 15 8 15H22Q24 15 24 17V26H20V20H10V26Z" fill="#3a94dc" />
      </svg>
    ),
  },
  {
    name: "Notepad",
    icon: (
      <svg viewBox="0 0 30 30" className={B}>
        <path d="M12 3L27 5L26 26L22 29Z" fill="#c8a868" />
        <path d="M11 3L25 4.6L22 28L2 24Z" fill="#6fb4c4" />
        <path d="M12 4L19 5L8 24L2.6 23Z" fill="#a8dbe4" />
        <path d="M11 2.6L25.6 4.4" stroke="#ddd" strokeWidth="1.6" strokeDasharray="1 .6" />
        <path d="M2 24L22 28.6L24 12" fill="none" stroke="#e8f4f6" strokeWidth="1" />
      </svg>
    ),
  },
  { name: "Spotify", icon: <FaSpotify className="size-[58px] text-[#1ed760]" /> },
  {
    name: "Xpadder",
    icon: (
      <svg viewBox="0 0 30 30" className={B}>
        <circle cx="16" cy="15.6" r="12.4" fill="#114a18" stroke="#b8b8b8" strokeWidth="2" />
        <path d="M8 8Q14 3 22 6L26 14L20 12Z" fill="#22e040" />
        <path d="M19 17L27 18L22 25L17 23Z" fill="#48e030" />
        <path d="M22 20l3 1-2 3z" fill="#f08030" />
        <path d="M1 3L13 11.6L21 8L17.6 14L22 18.4L16.4 18.4L13.6 24L12 18.6L7.6 19.6L10 15Z" fill="#f0f0f0" />
      </svg>
    ),
  },
  { name: "Display", icon: <Monitor className={B} /> },
  {
    name: "Control Center",
    icon: (
      <svg viewBox="0 0 30 30" className={B}>
        <rect x="2" y="6" width="26" height="18" rx="1" fill="#5cc0f4" stroke="#2a80c0" strokeWidth=".8" />
        <circle cx="9.4" cy="13.6" r="4.6" fill="#2a7ec4" />
        <path d="M9.4 13.6V8.4A5 5 0 0 1 14.4 13.6Z" fill="#ffb020" />
        <path d="M18 9h8M18 13h8M18 17h8" stroke="#d8f2ff" strokeWidth="1.8" strokeDasharray="3 2" />
        <path d="M6 21h8" stroke="#f09010" strokeWidth="1.4" />
        <path d="M16 21h8" stroke="#2a7ec4" strokeWidth="1.4" />
      </svg>
    ),
  },
  {
    name: "Irfan",
    icon: (
      <svg viewBox="0 0 30 30" className={B}>
        <path d="M4 18Q6 12 14 11.4Q22 11 25 14M4 18Q6 25 14 25.4Q17 25.6 19 24.6" fill="none" stroke="#f8a010" strokeWidth="2" strokeLinecap="round" />
        <path d="M20.4 14.6Q23.6 18 19.6 22Q14 25 11 20.6Q10 15.6 14.6 14.6Q18.6 15 17.4 18.6Q15.6 20.8 14 18.6" fill="none" stroke="#b81414" strokeWidth="1.8" />
        <path d="M4.4 11L3 8M10 7.4L9 3.8M18.4 7V3M24.8 11.4L27.4 8.6" stroke="#f8a010" strokeWidth="3" strokeLinecap="round" />
      </svg>
    ),
  },
  {
    name: "Sky Go",
    open: true,
    icon: (
      <svg viewBox="0 0 60 60" className={B}>
        <defs>
          <linearGradient id="sky-a"><stop offset="0" stopColor="#ff8a00" /><stop offset=".5" stopColor="#e0105a" /><stop offset="1" stopColor="#5a30b0" /></linearGradient>
        </defs>
        <rect width="60" height="30" fill="#fff" />
        <rect y="30" width="60" height="30" fill="url(#sky-a)" />
        <text x="30" y="21" textAnchor="middle" fontSize="25" fontWeight="700" fill="url(#sky-a)" fontFamily="Lato">sky</text>
        <text x="30" y="53" textAnchor="middle" fontSize="24" fill="#fff" fontFamily="Lato">Go</text>
      </svg>
    ),
  },
  {
    name: "Kodi",
    icon: (
      <svg viewBox="0 0 30 30" className={B}>
        <path d="M15 1.4L28.6 15L15 28.6L1.4 15Z" fill="#2ba3d8" stroke="#e8eef0" strokeWidth="1" />
        <path d="M8.2 9L11.4 6V23.6L8.2 21Z M11.4 15.4L20.6 6.4L23 8.8L13.6 18Z M14.4 14.4L23.6 20.6L21.2 23L12.4 16.8Z" fill="#eef4f6" />
      </svg>
    ),
  },
  {
    name: "Gamepad",
    icon: (
      <svg viewBox="0 0 30 30" className={B}>
        <defs>
          <linearGradient id="pad"><stop offset="0" stopColor="#ff1f5a" /><stop offset="1" stopColor="#ffa400" /></linearGradient>
        </defs>
        <path d="M6 7Q8 4.6 11 6.4H19Q22 4.6 24 7Q28.6 14 28.4 24Q26 26.6 23.4 22L20.6 18.6H9.4L6.6 22Q4 26.6 1.6 24Q1.4 14 6 7Z" fill="url(#pad)" />
        <circle cx="9" cy="13" r="2.5" fill="#202028" />
        <circle cx="20.6" cy="10.4" r="1.4" fill="#202028" /><circle cx="20.6" cy="15.6" r="1.4" fill="#202028" />
        <circle cx="18" cy="13" r="1.4" fill="#202028" /><circle cx="23.2" cy="13" r="1.4" fill="#202028" />
      </svg>
    ),
  },
  {
    name: "Rockstar",
    icon: (
      <svg viewBox="0 0 60 60" className={B}>
        <rect x="2" y="3" width="56" height="54" rx="7" fill="#ffb000" stroke="#111" strokeWidth="2" />
        <text x="28" y="36" textAnchor="middle" fontSize="33" fontWeight="900" fontStyle="italic" fontFamily="Liberation Sans">R</text>
        <path d="M40 30l3 6h7l-5 5 2 7-7-4-7 4 2-7-5-5h7z" fill="#fff" stroke="#111" strokeWidth="1.6" />
      </svg>
    ),
  },
  {
    name: "Overclock",
    icon: (
      <svg viewBox="0 0 30 30" className={B}>
        <circle cx="15" cy="15" r="14.6" fill="#555" />
        <circle cx="15" cy="15" r="10" fill="#333" stroke="#fff" strokeWidth="3" />
        <path d="M8.6 20Q11 10 14 10Q17 10 21.4 20Q17.6 17.6 15.6 14.6Q12.6 18.8 8.6 20Z" fill="#fff" />
      </svg>
    ),
  },
  {
    name: "Chrome",
    icon: (
      <svg viewBox="0 0 30 30" className={B}>
        <circle cx="15" cy="15" r="14" fill="#fc4" />
        <path d="M15 15L2.9 8A14 14 0 0 1 27.6 9H15Z" fill="#dd4b3e" />
        <path d="M15 15L2.9 8A14 14 0 0 0 14 29L20.4 18Z" fill="#1da362" />
        <path d="M15 9H27.8A14 14 0 0 1 14 29L20 18Z" fill="#ffcd46" />
        <circle cx="15" cy="15" r="6.4" fill="#fff" />
        <circle cx="15" cy="15" r="5" fill="#4688f4" />
      </svg>
    ),
  },
  {
    name: "Steam",
    icon: (
      <Disc className="bg-white">
        <FaSteam className="size-[59px] text-[#0d3562]" />
      </Disc>
    ),
  },
  {
    name: "Epic Games",
    icon: (
      <svg viewBox="0 0 60 60" className={B}>
        <path d="M4 3Q4 0 7 0H53Q56 0 56 3V47Q56 50 53 51L30 60L7 51Q4 50 4 47Z" fill="#000" />
        <text x="30" y="29" textAnchor="middle" fontSize="20" fontWeight="700" fill="#ddd" fontFamily="Liberation Sans">EPIC</text>
        <text x="30" y="43" textAnchor="middle" fontSize="11" fontWeight="700" fill="#ddd" fontFamily="Liberation Sans">GAMES</text>
        <path d="M20 51H40L30 56Z" fill="#ccc" />
      </svg>
    ),
  },
  { name: "Origin", icon: <SiOrigin className="size-[58px] text-[#e8602c]" /> },
  { name: "Ubisoft", icon: <Disc className="bg-[#0070ff] text-white"><SiUbisoft className="size-[48px]" /></Disc> },
  {
    name: "Firefox",
    open: true,
    icon: (
      <svg viewBox="0 0 30 30" className={B}>
        <defs>
          <linearGradient id="fox" x1="1" y1="0" x2=".2" y2="1"><stop offset="0" stopColor="#fff44f" /><stop offset=".45" stopColor="#ff8a1c" /><stop offset="1" stopColor="#f0207a" /></linearGradient>
        </defs>
        <path d="M18 1Q24 6 25 9L26 7Q29 12 28.4 17A13.4 12.4 0 0 1 2 17Q1.4 11 5 5.4L6 9L9 8L14 10Q14 5 18 1Z" fill="url(#fox)" />
        <circle cx="15" cy="15.4" r="5.6" fill="#7a3ae0" />
        <path d="M7 11Q12 11 13 13Q17 13 18 14Q15 15 14 17Q11 20 8 16Z" fill="#ff7a20" />
      </svg>
    ),
  },
  {
    name: "Netflix",
    icon: (
      <svg viewBox="0 0 60 60" className={B}>
        <rect width="60" height="60" fill="#000" />
        <path d="M20 10H26V50H20ZM34 10H40V50H34Z" fill="#b20710" />
        <path d="M20 10H27L40 50H33Z" fill="#e50914" />
      </svg>
    ),
  },
  { name: "Hardware monitor", open: true, icon: <Meter className={B} /> },
  { name: "HotKeyz", open: true, active: true, icon: <Ball className={B} /> },
];

const T = "size-10";

const TRAY: { name: string; icon: ReactNode }[] = [
  { name: "Show hidden icons", icon: <svg viewBox="0 0 40 40" className={T}><path d="M5 26L20 11L35 26" fill="none" stroke="#fff" strokeWidth="2" /></svg> },
  { name: "Ring", icon: <svg viewBox="0 0 40 40" className={T}><circle cx="20" cy="20" r="16.5" fill="none" stroke="#9a10f0" strokeWidth="7" /></svg> },
  {
    name: "Light",
    icon: (
      <svg viewBox="0 0 40 40" className={T}>
        <circle cx="20" cy="20" r="19.5" fill="#4a1c78" />
        <path d="M20 39.5A19.5 19.5 0 0 0 39.5 20L20 20Z" fill="#10808c" />
        <path d="M20 39.5A19.5 19.5 0 0 1 .5 20L20 20Z" fill="#902070" />
        <circle cx="20" cy="13" r="9" fill="#dca8ff" />
        <path d="M14 19H26L24 37H16Z" fill="#e8e4ee" />
      </svg>
    ),
  },
  { name: "Hardware monitor", icon: <Meter className={T} /> },
  { name: "Xpadder", icon: <svg viewBox="0 0 40 40" className={T}><path d="M3 3L18 15L34 10L26 19L36 26L25 26L21 37L18 26L8 32L14 20Z" fill="#c8c8c8" /></svg> },
  { name: "Sensor 40", icon: <span className="text-[#1a8cff]">40</span> },
  { name: "Sensor 35", icon: <span className="text-[#10f010]">35</span> },
  { name: "Sensor 59", icon: <span>59⁝</span> },
  {
    name: "Security",
    icon: (
      <svg viewBox="0 0 40 40" className={T}>
        <path d="M20 1L36 6V18Q35 31 20 39Q5 31 4 18V6Z" fill="#fff" stroke="#000" strokeWidth="2" />
        <path d="M20 2V38M4 19H36" stroke="#000" strokeWidth="2.4" />
        <circle cx="29" cy="29" r="11" fill="#0f9040" />
        <path d="M24 29L28 33L35 25" fill="none" stroke="#fff" strokeWidth="2" />
      </svg>
    ),
  },
  {
    name: "Network",
    icon: (
      <svg viewBox="0 0 40 40" className={T} fill="none" stroke="#fff" strokeWidth="2">
        <path d="M8 5H39V30H8V17M24 30V36M16 36H32M1 5H8V17H1ZM5 17V36" />
      </svg>
    ),
  },
  {
    name: "Refresh rate",
    icon: (
      <svg viewBox="0 0 40 40" className={T}>
        <rect x="1" y="5" width="38" height="27" fill="#4169ff" stroke="#667" strokeWidth="2" />
        <rect x="2" y="8" width="26" height="17" fill="#100018" />
        <text x="15" y="22" textAnchor="middle" fontSize="17" fontWeight="700" fill="#f010f0" fontFamily="Liberation Sans">60</text>
        <path d="M14 32h12v5H14z" fill="#889" />
      </svg>
    ),
  },
  {
    name: "Steam",
    icon: (
      <span className="grid size-[39px] place-items-center rounded-full bg-[#d8e4ec]">
        <FaSteam className="size-10 text-[#134a80]" />
      </span>
    ),
  },
  {
    name: "Volume",
    icon: (
      <svg viewBox="0 0 40 40" className={T} fill="none" stroke="#fff" strokeWidth="2">
        <path d="M1 14H6L14 6V34L6 26H1ZM20 15Q23 20 20 25M25 10Q31 20 25 30M31 4Q41 20 31 36" />
      </svg>
    ),
  },
];

function Taskbar() {
  return (
    <nav className="flex h-[100px] shrink-0 bg-linear-to-r from-[#1f1f27] via-[#222324] to-[#2f2426] text-white">
      <button aria-label="Start" className="grid w-[121px] place-items-center">
        <svg viewBox="0 0 40 40" className="size-10" fill="#fff">
          <path d="M0 5.6L16 3.4V19H0ZM18 3.1L40 0V19H18ZM0 21H16V36.6L0 34.4ZM18 21H40V40L18 36.9Z" />
        </svg>
      </button>
      <button aria-label="Search" className="mr-1 grid w-[121px] place-items-center">
        <svg viewBox="0 0 40 40" className="size-10" fill="none" stroke="#fff" strokeWidth="2.4">
          <circle cx="26" cy="14" r="12.6" />
          <path d="M17 23L1 39" />
        </svg>
      </button>
      {APPS.map((a) => (
        <button
          key={a.name}
          aria-label={a.name}
          className={`mx-[2px] grid w-[110px] place-items-center ${a.active ? "bg-[#4d494b]" : ""}`}
        >
          <span className="col-start-1 row-start-1">{a.icon}</span>
          {a.open && (
            <span className={`col-start-1 row-start-1 h-[5px] self-end bg-[#ffb6ab] ${a.active ? "w-[110px]" : "w-[92px]"}`} />
          )}
        </button>
      ))}
      <div className={`ml-auto flex items-center text-[30px] leading-[47px] ${SEGOE}`}>
        {TRAY.map((t, i) => (
          <button key={i} aria-label={t.name} className="grid w-[60px] place-items-center font-semibold">{t.icon}</button>
        ))}
        <div className="w-[175px] text-center text-[28px]">
          <div>11:45</div>
          <div>20.03.2020</div>
        </div>
        <span className="mr-[9px] h-full w-[3px] bg-[#777172]" />
      </div>
    </nav>
  );
}

export default function App() {
  return (
    <div className={`relative flex h-screen flex-col overflow-hidden bg-[#efefef] text-[26px] leading-8 text-black ${SANS}`}>
      <TitleBar />
      <div className="flex min-h-0 flex-1 flex-col border-r-2 border-[#a0a0a0]">
        <Toolbar />
        <div className="flex min-h-0 flex-1 gap-[11px] border-t-[3px] border-white pt-[7px] pr-[9px] pl-3">
          <CategoryPanel />
          <HotkeyTable />
        </div>
        <StatusBar />
      </div>
      <Taskbar />
      <Dialog />
      <PopupMenu items={CONTEXT_MENU} place="left-[2146px] top-[519px] w-[601px]" arrowPad="pr-[16px]" />
      <PopupMenu items={SUB_MENU} place="left-[2733px] top-[798px] w-[690px]" arrowPad="pr-[17px]" />
    </div>
  );
}
